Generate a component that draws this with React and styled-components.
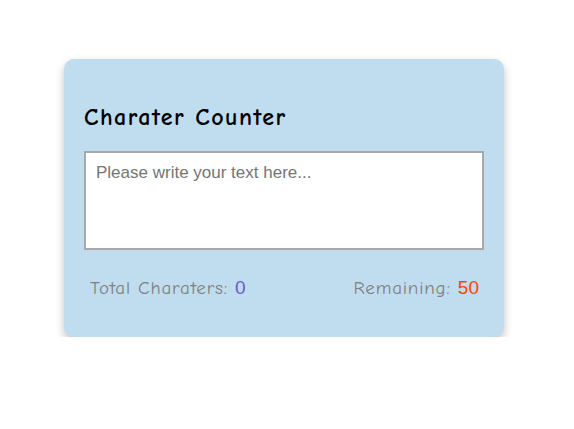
import React, { useState } from 'react'
import styled, { createGlobalStyle } from 'styled-components'

const MAX = 50

const GlobalStyle = createGlobalStyle`
  body {
    margin: 0;
    background: #ffffff;
    font-family: "Comic Sans MS", "Comic Neue", cursive;
  }
`

function App() {
  const [text, setText] = useState('')

  return (
    <Page>
      <GlobalStyle />
      <Card>
        <Title>Charater Counter</Title>
        <TextBox
          placeholder="Please write your text here..."
          value={text}
          maxLength={MAX}
          onChange={(e) => setText(e.target.value)}
        />
        <Stats>
          <Stat>
            Total Charaters: <Count color="#6a5acd">{text.length}</Count>
          </Stat>
          <Stat>
            Remaining: <Count color="#ff4500">{MAX - text.length}</Count>
          </Stat>
        </Stats>
      </Card>
    </Page>
  )
}

export default App

const Page = styled.div`
  padding: 59px 0 0 64px;
`

const Card = styled.div`
  width: 440px;
  height: 278px;
  box-sizing: border-box;
  padding: 43px 20px 0;
  background: #c0ddef;
  border-radius: 10px;
  box-shadow: 0 4px 8px rgba(0, 0, 0, 0.25);
`

const Title = styled.h2`
  margin: 0 0 19px;
  font-size: 24px;
  line-height: 30px;
  letter-spacing: 1.5px;
  font-weight: bold;
  color: #000;
`

const TextBox = styled.textarea`
  display: block;
  width: 400px;
  height: 99px;
  box-sizing: border-box;
  padding: 10px;
  border: 2px solid #a9a9a9;
  resize: none;
  outline: none;
  font-family: "Liberation Sans", Arial, sans-serif;
  font-size: 17px;
  color: #333;
  &::placeholder {
    color: #757575;
  }
`

const Stats = styled.div`
  display: flex;
  justify-content: space-between;
  margin-top: 26px;
  padding: 0 5px 0 6px;
  font-size: 19px;
  line-height: 24px;
  letter-spacing: 0.8px;
  color: #808080;
`

const Stat = styled.span``

const Count = styled.span`
  font-family: "Liberation Sans", Arial, sans-serif;
  letter-spacing: 0;
  color: ${(props) => props.color};
`
